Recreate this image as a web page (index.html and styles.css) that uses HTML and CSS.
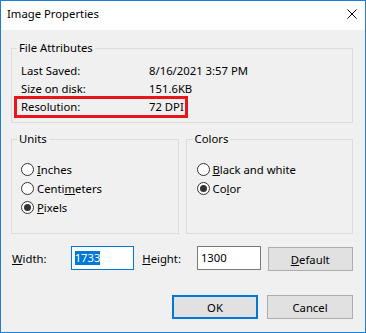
FILE: index.html
```html
<!DOCTYPE html>
<html lang="en">
<head>
    <meta charset="UTF-8">
    <title>Image Properties</title>
    <link rel="stylesheet" href="styles.css">
</head>
<body>
    <div class="window">
        <div class="titlebar">
            <span class="title">Image Properties</span>
            <svg class="close" viewBox="0 0 10 10" width="10" height="10">
                <path d="M0.5 0.5 L9.5 9.5 M9.5 0.5 L0.5 9.5" />
            </svg>
        </div>

        <div class="content">
            <!-- File attributes -->
            <fieldset class="group attrs">
                <legend>File Attributes</legend>
                <div class="attr first"><span>Last Saved:</span><span>8/16/2021 3:57 PM</span></div>
                <div class="attr"><span>Size on disk:</span><span>151.6KB</span></div>
                <div class="attr marked"><span>Resolution:</span><span>72 DPI</span></div>
            </fieldset>

            <div class="groups">
                <fieldset class="group options">
                    <legend>Units</legend>
                    <div class="radio"><span class="dot"></span><span><u>I</u>nches</span></div>
                    <div class="radio"><span class="dot"></span><span>Centi<u>m</u>eters</span></div>
                    <div class="radio checked"><span class="dot"></span><span><u>P</u>ixels</span></div>
                </fieldset>
                <fieldset class="group options colors">
                    <legend>Colors</legend>
                    <div class="radio"><span class="dot"></span><span><u>B</u>lack and white</span></div>
                    <div class="radio checked"><span class="dot"></span><span>Co<u>l</u>or</span></div>
                </fieldset>
            </div>

            <div class="size-row">
                <span class="field-label"><u>W</u>idth:</span>
                <div class="input focused"><span class="selected">1733</span></div>
                <span class="field-label height"><u>H</u>eight:</span>
                <div class="input">1300</div>
                <div class="button default-btn"><span><u>D</u>efault</span></div>
            </div>

            <div class="actions">
                <div class="button primary">OK</div>
                <div class="button">Cancel</div>
            </div>
        </div>
    </div>
</body>
</html>
```

FILE: styles.css
```css
body {
    margin: 0;
    font-family: "Noto Sans", "Open Sans", sans-serif;
    font-size: 11.3px;
    color: #000;
}

.window {
    box-sizing: border-box;
    width: 366px;
    height: 333px;
    border: 1px solid #1a7fd6;
    background: #f0f0f0;
    display: flex;
    flex-direction: column;
}

.titlebar {
    height: 29px;
    flex: none;
    background: #fff;
    display: flex;
    align-items: center;
    justify-content: space-between;
    padding: 0 8px 0 6px;
}

.title {
    line-height: 16px;
    margin-top: -3px;
}

.close {
    margin-top: -4px;
    stroke: #000;
    stroke-width: 1;
    fill: none;
}

.content {
    padding: 0 12px 0 10px;
}

.group {
    margin: 0;
    min-width: 0;
    border: 1px solid #dcdcdc;
}

.group legend {
    margin-left: -4px;
    padding: 0 2px;
    line-height: 16px;
}

/* File attributes */

.attrs {
    margin-top: 10px;
    padding: 5px 9px 4px 9px;
}

.attr {
    display: grid;
    grid-template-columns: 128px auto;
    height: 18px;
    line-height: 18px;
    white-space: nowrap;
}

.attr.first {
    height: 19px;
    line-height: 19px;
}

.attr.marked {
    box-sizing: border-box;
    width: 174px;
    height: 22px;
    line-height: 16px;
    margin: -2px 0 0 -7px;
    padding-left: 4px;
    border: 3px solid #e8151b;
}

/* Units / colors */

.groups {
    display: grid;
    grid-template-columns: 1fr 1fr;
    gap: 7px;
    margin-top: 8px;
}

.options {
    padding: 13px 9px 16px 9px;
}

.options.colors {
    padding-left: 10px;
}

.radio {
    display: flex;
    align-items: center;
    gap: 3px;
    height: 19px;
}

.dot {
    box-sizing: border-box;
    width: 13px;
    height: 13px;
    border: 1px solid #333;
    border-radius: 50%;
    background: #fff;
    display: flex;
    align-items: center;
    justify-content: center;
}

.checked .dot::after {
    content: "";
    width: 7px;
    height: 7px;
    border-radius: 50%;
    background: #333;
}

/* Width / height */

.size-row {
    display: flex;
    align-items: center;
    margin-top: 12px;
    height: 24px;
}

.field-label {
    width: 59px;
    margin-left: 1px;
}

.field-label.height {
    width: 55px;
    margin-left: 8px;
}

.input {
    box-sizing: border-box;
    width: 64px;
    height: 24px;
    border: 1px solid #7a7a7a;
    background: #fff;
    padding: 0 3px;
    line-height: 22px;
}

.input.focused {
    border-color: #0078d7;
}

.selected {
    background: #0078d7;
    color: #fff;
    display: inline-block;
    line-height: 14px;
}

.button {
    box-sizing: border-box;
    width: 86px;
    height: 24px;
    border: 1px solid #adadad;
    background: #e1e1e1;
    display: flex;
    align-items: center;
    justify-content: center;
}

.default-btn {
    margin-left: 7px;
    margin-top: 2px;
}

.actions {
    display: flex;
    justify-content: flex-end;
    gap: 9px;
    margin-top: 25px;
}

.button.primary {
    border: 2px solid #0078d7;
}
```
